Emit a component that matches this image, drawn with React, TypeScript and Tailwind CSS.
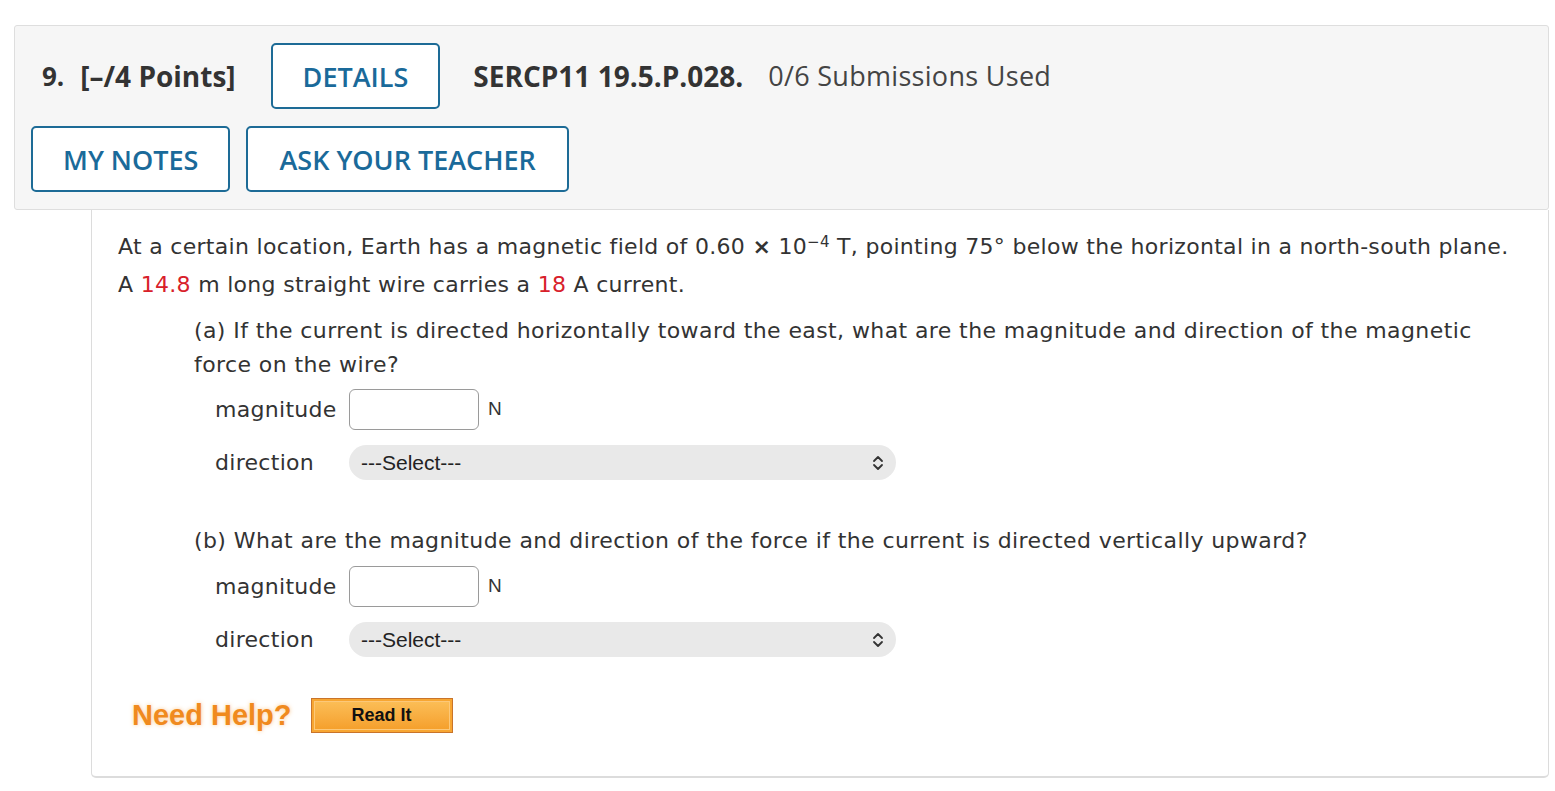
import { useState } from 'react';

const btn =
  'h-[66px] rounded-[5px] border-2 border-[#1d6b96] bg-white px-[30px] text-[27px] font-semibold text-[#1a6a9a] leading-none';

function UpDown() {
  return (
    <svg width="12" height="16" viewBox="0 0 12 16" fill="none" stroke="#333" strokeWidth="1.8" strokeLinecap="round" strokeLinejoin="round">
      <path d="M2 6l4-4 4 4" />
      <path d="M2 10l4 4 4-4" />
    </svg>
  );
}

function AnswerRows() {
  const [value, setValue] = useState('');
  return (
    <div className="pl-[21px]">
      <div className="flex h-[41px] items-center">
        <span className="w-[134px]">magnitude</span>
        <input
          value={value}
          onChange={(e) => setValue(e.target.value)}
          className="h-[41px] w-[130px] rounded-[6px] border border-[#9a9a9a] bg-white outline-none"
        />
        <span className="ml-[9px] self-start pt-[6px] font-['Liberation_Sans',sans-serif] text-[19px] tracking-normal text-[#333]">N</span>
      </div>
      <div className="mt-[15px] flex h-[35px] items-center">
        <span className="w-[134px]">direction</span>
        <div className="flex h-[35px] w-[547px] items-center justify-between rounded-[18px] bg-[#e9e9e9] pl-[12px] pr-[12px] font-['Liberation_Sans',sans-serif] text-[21px] tracking-normal text-[#222]">
          <span>---Select---</span>
          <UpDown />
        </div>
      </div>
    </div>
  );
}

export default function App() {
  return (
    <div className="min-h-[791px] bg-white pt-[25px]">
      {/* Question header */}
      <div className="ml-[14px] w-[1535px] rounded-[3px] border border-[#dedede] bg-[#f6f6f6] px-[16px] py-[17px] font-['Open_Sans',sans-serif] text-[#333]">
        <div className="flex items-center">
          <span className="ml-[11px] text-[26px] font-bold">9.</span>
          <span className="ml-[16px] text-[28px] font-bold">[–/4 Points]</span>
          <button className={`${btn} ml-[35px]`}>DETAILS</button>
          <span className="ml-[33px] text-[28px] font-bold">SERCP11 19.5.P.028.</span>
          <span className="ml-[25px] text-[27px] tracking-[0.3px] text-[#444]">0/6 Submissions Used</span>
        </div>
        <div className="mt-[17px] flex gap-[16px]">
          <button className={btn}>MY NOTES</button>
          <button className={`${btn} px-[31px]`}>ASK YOUR TEACHER</button>
        </div>
      </div>

      {/* Question body */}
      <div className="ml-[91px] w-[1458px] rounded-b-[5px] border border-t-0 border-b-2 border-[#dcdcdc] pb-[38px] pl-[26px] pt-[18px] font-['DejaVu_Sans',Verdana,sans-serif] text-[22px] tracking-[0.3px] text-[#333]">
        <p className="leading-[38px]">
          At a certain location, Earth has a magnetic field of 0.60 <b>×</b> 10
          <sup className="text-[15px]">−4</sup> T, pointing 75° below the horizontal in a north-south plane.
          <br />A <span className="text-[#d8202a]">14.8</span> m long straight wire carries a{' '}
          <span className="text-[#d8202a]">18</span> A current.
        </p>

        <div className="ml-[76px] mt-[10px] tracking-[0.4px]">
          <p className="leading-[34px]">
            (a) If the current is directed horizontally toward the east, what are the magnitude and direction of the magnetic
            <br />
            force on the wire?
          </p>
          <div className="mt-[7px] tracking-[0.3px]">
            <AnswerRows />
          </div>

          <p className="mt-[44px] leading-[34px]">
            (b) What are the magnitude and direction of the force if the current is directed vertically upward?
          </p>
          <div className="mt-[8px] tracking-[0.3px]">
            <AnswerRows />
          </div>
        </div>

        <div className="ml-[14px] mt-[37px] flex items-center">
          <span className="font-['Liberation_Sans',sans-serif] text-[29px] font-bold tracking-normal text-[#f08a1e] [text-shadow:0_0_4px_rgba(250,190,120,0.8)]">
            Need Help?
          </span>
          <button className="ml-[19px] h-[35px] w-[142px] border border-[#c9742a] bg-[#f7a632] p-[2px]">
            <span className="flex h-full w-full items-center justify-center border border-[#fcc879] bg-gradient-to-b from-[#fbbd55] to-[#f5a02c] font-['Liberation_Sans',sans-serif] text-[18px] font-bold tracking-normal text-[#111]">
              Read It
            </span>
          </button>
        </div>
      </div>
    </div>
  );
}
